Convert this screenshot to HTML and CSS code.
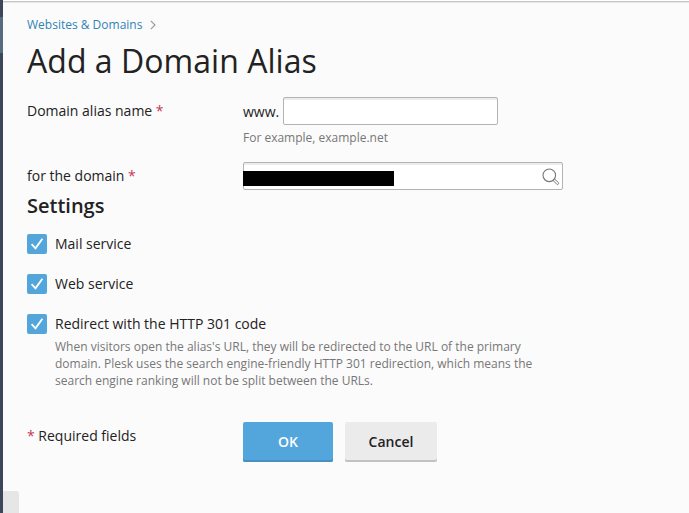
FILE: index.html
```
<!DOCTYPE html>
<html lang="en">
<head>
    <meta charset="UTF-8">
    <meta name="viewport" content="width=device-width, initial-scale=1.0">
    <title>Add a Domain Alias</title>
    <link rel="stylesheet" href="styles.css">
</head>
<body>

    <div class="page">
        <div class="sidebar">
            <div class="sidebar-active"></div>
        </div>

        <div class="content">
            <div class="pathbar">
                <a href="#">Websites &amp; Domains</a>
                <svg class="arrow" width="6" height="10" viewBox="0 0 6 10"><path d="M0.8 0.8 L5 5 L0.8 9.2" fill="none" stroke="#999" stroke-width="1.1"/></svg>
            </div>

            <h1>Add a Domain Alias</h1>

            <form>
                <div class="form-row alias-row">
                    <label class="field-name" for="alias">Domain alias name <span class="required">*</span></label>
                    <div class="field-value">
                        <div class="alias-field">
                            <span class="prefix">www.</span>
                            <input type="text" id="alias" class="input alias-input">
                        </div>
                        <p class="hint">For example, example.net</p>
                    </div>
                </div>

                <div class="form-row domain-row">
                    <label class="field-name">for the domain <span class="required">*</span></label>
                    <div class="input lookup">
                        <span class="lookup-value"></span>
                        <svg class="lookup-icon" width="18" height="18" viewBox="0 0 18 18" fill="none" stroke="#777">
                            <circle cx="7.3" cy="7.3" r="6.3" stroke-width="1.1"/>
                            <path d="M10.9 12.3 L12.4 10.8 L16.4 14.6 Q16.9 15.6 16.2 16.2 Q15.4 16.8 14.7 16.2 Z" stroke-width="1"/>
                        </svg>
                    </div>
                </div>

                <h2>Settings</h2>

                <div class="check-row">
                    <span class="checkbox"><svg width="20" height="20" viewBox="0 0 20 20"><path d="M4.6 10.2 L8.5 14.3 L15.4 4.8" fill="none" stroke="#fff" stroke-width="1.9"/></svg></span>
                    <span>Mail service</span>
                </div>
                <div class="check-row">
                    <span class="checkbox"><svg width="20" height="20" viewBox="0 0 20 20"><path d="M4.6 10.2 L8.5 14.3 L15.4 4.8" fill="none" stroke="#fff" stroke-width="1.9"/></svg></span>
                    <span>Web service</span>
                </div>
                <div class="check-row last">
                    <span class="checkbox"><svg width="20" height="20" viewBox="0 0 20 20"><path d="M4.6 10.2 L8.5 14.3 L15.4 4.8" fill="none" stroke="#fff" stroke-width="1.9"/></svg></span>
                    <span>Redirect with the HTTP 301 code</span>
                </div>
                <p class="hint redirect-hint">When visitors open the alias's URL, they will be redirected to the URL of the primary domain. Plesk uses the search engine-friendly HTTP 301 redirection, which means the search engine ranking will not be split between the URLs.</p>

                <div class="form-row buttons">
                    <div class="field-name"><span class="required">*</span> Required fields</div>
                    <button type="button" class="btn btn-ok">OK</button>
                    <button type="button" class="btn btn-cancel">Cancel</button>
                </div>
            </form>
        </div>

        <div class="collapser"></div>
    </div>

</body>
</html>
```
FILE: styles.css
```
* {
    box-sizing: border-box;
}

body {
    font-family: "Open Sans", sans-serif;
    font-size: 14px;
    line-height: 20px;
    margin: 0;
    background-color: #fbfbfb;
    color: #222;
}

h1, h2, p {
    margin: 0;
}

.page {
    position: relative;
    display: flex;
    height: 513px;
    overflow: hidden;
}

/* Sidebar edge */
.sidebar {
    width: 3px;
    padding-top: 17px;
    background-color: #3c475a;
}

.sidebar-active {
    height: 36px;
    background-color: #566b7e;
}

.content {
    flex: 1;
    padding: 12px 24px 0;
    border-top: 1px solid #fff;
    box-shadow: inset 0 1px 0 #c6c8c6, inset 0 2px 0 #e4e6e4;
}

.pathbar {
    display: flex;
    align-items: center;
    gap: 8px;
    height: 24px;
    font-size: 12px;
}

.pathbar a {
    color: #2f84b7;
    text-decoration: none;
}

h1 {
    font-size: 32px;
    line-height: 40px;
    font-weight: 400;
    letter-spacing: 0.04px;
    margin-top: 4px;
}

/* Form */
.form-row {
    display: flex;
}

.alias-row {
    margin-top: 16px;
}

.field-name {
    width: 216px;
    padding-top: 4px;
}

.required {
    color: #c8375a;
}

.alias-field {
    display: flex;
    gap: 4px;
}

.prefix {
    width: 36px;
    padding-top: 5px;
}

.input {
    height: 28px;
    border: 1px solid #b3b3b3;
    border-radius: 2px;
    background-color: #fff;
    box-shadow: inset 0 2px 0 #ececec;
}

.alias-input {
    width: 215px;
    padding: 0 6px;
    font: inherit;
}

.hint {
    font-size: 12px;
    line-height: 17px;
    color: #777;
}

.alias-row .hint {
    margin-top: 4px;
}

.domain-row {
    margin-top: 16px;
}

.lookup {
    display: flex;
    justify-content: space-between;
    width: 320px;
    padding-right: 2px;
}

.lookup-value {
    width: 151px;
    height: 15px;
    margin: 8px 0 0 -1px;
    background-color: #000;
}

.lookup-icon {
    margin-top: 5px;
}

h2 {
    font-size: 20px;
    line-height: 28px;
    font-weight: 600;
    margin-top: 2px;
}

.check-row {
    display: flex;
    gap: 8px;
    margin: 14px 0 20px;
}

.check-row + .check-row {
    margin-top: 0;
}

.check-row.last {
    margin-bottom: 4px;
}

.checkbox {
    width: 20px;
    height: 20px;
    border-radius: 2px;
    background-color: #53a6dc;
}

.checkbox svg {
    display: block;
}

.redirect-hint {
    width: 490px;
    margin-left: 28px;
}

/* Buttons */
.buttons {
    margin-top: 33px;
}

.btn {
    height: 40px;
    border: none;
    border-radius: 2px;
    padding: 0 0 2px;
    font-family: inherit;
    font-size: 14px;
    font-weight: 600;
    cursor: pointer;
}

.btn-ok {
    width: 90px;
    margin-right: 12px;
    background-color: #53a6dc;
    color: #fff;
    box-shadow: inset 0 -2px 0 #4890c0;
}

.btn-cancel {
    width: 92px;
    background-color: #ebebeb;
    color: #222;
    box-shadow: inset 0 -2px 0 #c2c2c2;
}

/* Sidebar toggle, sits over the content */
.collapser {
    position: absolute;
    left: 3px;
    bottom: 0;
    width: 16px;
    height: 22px;
    border-top-right-radius: 3px;
    background-color: #e6e6e6;
}
```
